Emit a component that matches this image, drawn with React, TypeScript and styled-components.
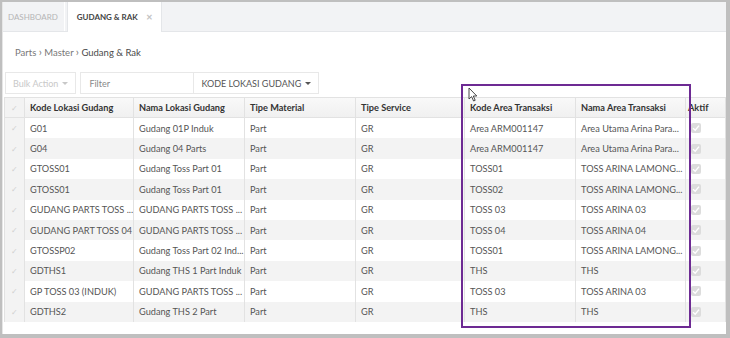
import * as React from 'react';
import styled, { createGlobalStyle } from 'styled-components';

const GlobalStyle = createGlobalStyle`
  html, body {
    margin: 0;
    padding: 0;
    background: #bfbfbf;
    font-family: Lato, "Open Sans", sans-serif;
  }
  * {
    box-sizing: border-box;
  }
`;

const rows = [
  ['G01', 'Gudang 01P Induk', 'Part', 'GR', 'Area ARM001147', 'Area Utama Arina Para...'],
  ['G04', 'Gudang 04 Parts', 'Part', 'GR', 'Area ARM001147', 'Area Utama Arina Para...'],
  ['GTOSS01', 'Gudang Toss Part 01', 'Part', 'GR', 'TOSS01', 'TOSS ARINA LAMONG...'],
  ['GTOSS01', 'Gudang Toss Part 01', 'Part', 'GR', 'TOSS02', 'TOSS ARINA LAMONG...'],
  ['GUDANG PARTS TOSS ...', 'GUDANG PARTS TOSS ...', 'Part', 'GR', 'TOSS 03', 'TOSS ARINA 03'],
  ['GUDANG PART TOSS 04', 'GUDANG PARTS TOSS ...', 'Part', 'GR', 'TOSS 04', 'TOSS ARINA 04'],
  ['GTOSSP02', 'Gudang Toss Part 02 Ind...', 'Part', 'GR', 'TOSS01', 'TOSS ARINA LAMONG...'],
  ['GDTHS1', 'Gudang THS 1 Part Induk', 'Part', 'GR', 'THS', 'THS'],
  ['GP TOSS 03 (INDUK)', 'GUDANG PARTS TOSS ...', 'Part', 'GR', 'TOSS 03', 'TOSS ARINA 03'],
  ['GDTHS2', 'Gudang THS 2 Part', 'Part', 'GR', 'THS', 'THS'],
];

const headers = [
  'Kode Lokasi Gudang',
  'Nama Lokasi Gudang',
  'Tipe Material',
  'Tipe Service',
  'Kode Area Transaksi',
  'Nama Area Transaksi',
];

const columns = '20px 109px 111px 111px 109px 111px 110px 1fr';

function App() {
  return (
    <>
      <GlobalStyle />
      <Panel>
        <TabBar>
          <Tab>DASHBOARD</Tab>
          <Tab active>
            GUDANG &amp; RAK <Close>✕</Close>
          </Tab>
        </TabBar>
        <Breadcrumb>
          Parts <Sep>›</Sep> Master <Sep>›</Sep> <b>Gudang &amp; Rak</b>
        </Breadcrumb>
        <Toolbar>
          <Button disabled>
            Bulk Action <Caret />
          </Button>
          <FilterInput placeholder="Filter" />
          <Button>
            KODE LOKASI GUDANG <Caret />
          </Button>
        </Toolbar>
        <Table>
          <HeadRow>
            <CheckCell>✓</CheckCell>
            {headers.map((h) => (
              <HeadCell key={h}>{h}</HeadCell>
            ))}
            <HeadCell narrow>Aktif</HeadCell>
          </HeadRow>
          {rows.map((r, i) => (
            <Row key={i} striped={i % 2 === 1}>
              <CheckCell>✓</CheckCell>
              {r.map((c, j) => (
                <Cell key={j}>{c}</Cell>
              ))}
              <Cell>
                <Box>
                  <svg width="8" height="8" viewBox="0 0 8 8">
                    <path d="M1 4.2 L3.2 6.2 L7 1.6" stroke="#fff" strokeWidth="1.4" fill="none" />
                  </svg>
                </Box>
              </Cell>
            </Row>
          ))}
        </Table>
        <Highlight />
        <Cursor width="10" height="15" viewBox="0 0 10 15">
          <path d="M1 1 L1 12 L3.6 9.6 L5.6 14 L7.2 13.3 L5.3 9 L8.8 9 Z" fill="#fff" stroke="#333" strokeWidth="0.9" />
        </Cursor>
      </Panel>
    </>
  );
}

const Panel = styled.div`
  position: relative;
  margin: 2px 4px 0 2px;
  height: 332px;
  background: #fff;
  border-left: 1px solid #e6e6e6;
  overflow: hidden;
`;

const TabBar = styled.div`
  display: flex;
  height: 30px;
  background: #f2f3f5;
  border-bottom: 1px solid #e4e6e9;
`;

const Tab = styled.div<{ active?: boolean }>`
  display: flex;
  align-items: center;
  gap: 8px;
  height: ${(p) => (p.active ? '30px' : '29px')};
  padding: ${(p) => (p.active ? '0 8px 0 9px' : '0 6px 0 5px')};
  margin-right: 2px;
  background: ${(p) => (p.active ? '#fff' : '#f2f3f5')};
  color: ${(p) => (p.active ? '#444' : '#b5b5b5')};
  font-size: 8px;
  font-weight: ${(p) => (p.active ? 700 : 400)};
  border-right: 1px solid ${(p) => (p.active ? '#e4e6e9' : '#fff')};
  border-left: ${(p) => (p.active ? '1px solid #e4e6e9' : 'none')};
`;

const Close = styled.span`
  color: #c4c4c4;
  font-size: 8px;
  font-weight: 700;
`;

const Breadcrumb = styled.div`
  padding: 13px 0 0 12px;
  height: 40px;
  font-size: 9.5px;
  color: #777;

  b {
    color: #4a4a4a;
    font-weight: 400;
  }
`;

const Sep = styled.span`
  color: #777;
  font-size: 11px;
`;

const Toolbar = styled.div`
  display: flex;
  height: 22px;
  margin-left: 2px;
`;

const Button = styled.button`
  display: flex;
  align-items: center;
  gap: 4px;
  height: 22px;
  padding: 0 7px;
  background: #fff;
  border: 1px solid #e8e8e8;
  color: ${(p) => (p.disabled ? '#c8c8c8' : '#555')};
  font-family: Lato, sans-serif;
  font-size: 9px;
`;

const Caret = styled.span`
  display: inline-block;
  width: 0;
  height: 0;
  border-left: 3px solid transparent;
  border-right: 3px solid transparent;
  border-top: 3px solid currentColor;
`;

const FilterInput = styled.input`
  width: 113px;
  height: 22px;
  margin-left: 4px;
  padding: 0 8px;
  border: 1px solid #e8e8e8;
  border-right: none;
  font-family: Lato, sans-serif;
  font-size: 9px;
  color: #555;
  outline: none;

  &::placeholder {
    color: #888;
  }
`;

const Table = styled.div`
  margin: 3px 0 0 1px;
  border-left: 1px solid #e2e2e2;
`;

const HeadRow = styled.div`
  display: grid;
  grid-template-columns: ${columns};
  height: 21px;
  background: linear-gradient(#f9f9f9, #f0f0f0);
  border-top: 1px solid #e2e2e2;
  border-bottom: 1px solid #e2e2e2;
  color: #333;
`;

const Row = styled.div<{ striped: boolean }>`
  display: grid;
  grid-template-columns: ${columns};
  height: 20.4px;
  background: ${(p) => (p.striped ? '#f3f3f3' : '#fff')};
  color: #555;
`;

const Cell = styled.div`
  display: flex;
  align-items: center;
  padding-left: 5px;
  font-size: 9.2px;
  white-space: nowrap;
  overflow: hidden;
  border-right: 1px solid #e2e2e2;
`;

const HeadCell = styled(Cell)<{ narrow?: boolean }>`
  padding-left: ${(p) => (p.narrow ? '2px' : '5px')};
  font-weight: 700;
  color: #333;
`;

const CheckCell = styled(Cell)`
  justify-content: center;
  padding-left: 0;
  color: #d0d0d0;
  font-size: 8px;
  background: #f3f3f3;
`;

const Box = styled.span`
  display: flex;
  align-items: center;
  justify-content: center;
  width: 10px;
  height: 10px;
  border-radius: 2px;
  background: #dcdcdc;
`;

const Highlight = styled.div`
  position: absolute;
  left: 458px;
  top: 82px;
  width: 230px;
  height: 244px;
  border: 2px solid #6d2a93;
  pointer-events: none;
`;

const Cursor = styled.svg`
  position: absolute;
  left: 465px;
  top: 85px;
`;

export default App;
